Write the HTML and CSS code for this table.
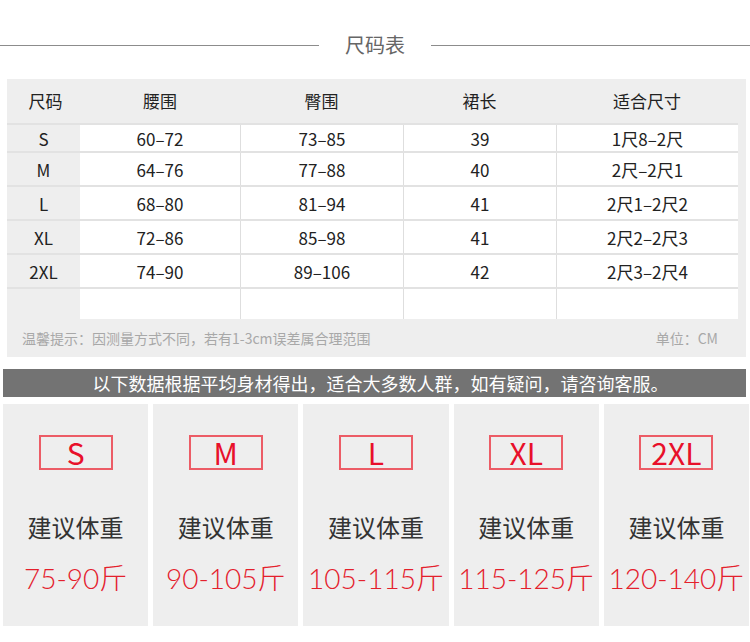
FILE: index.html
```html
<!DOCTYPE html>
<html lang="zh">
<head>
<meta charset="utf-8">
<link rel="stylesheet" href="styles.css">
</head>
<body>
<div class="title">
  <span class="line"></span>
  <span class="title-text">尺码表</span>
  <span class="line"></span>
</div>

<div class="table">
  <div class="row head">
    <div class="c c1">尺码</div><div class="c">腰围</div><div class="c">臀围</div><div class="c">裙长</div><div class="c">适合尺寸</div>
  </div>
  <div class="row r-s">
    <div class="c c1">S</div><div class="c w">60–72</div><div class="c w">73–85</div><div class="c w">39</div><div class="c w">1尺8–2尺</div>
  </div>
  <div class="row">
    <div class="c c1">M</div><div class="c w">64–76</div><div class="c w">77–88</div><div class="c w">40</div><div class="c w">2尺–2尺1</div>
  </div>
  <div class="row">
    <div class="c c1">L</div><div class="c w">68–80</div><div class="c w">81–94</div><div class="c w">41</div><div class="c w">2尺1–2尺2</div>
  </div>
  <div class="row">
    <div class="c c1">XL</div><div class="c w">72–86</div><div class="c w">85–98</div><div class="c w">41</div><div class="c w">2尺2–2尺3</div>
  </div>
  <div class="row">
    <div class="c c1">2XL</div><div class="c w">74–90</div><div class="c w">89–106</div><div class="c w">42</div><div class="c w">2尺3–2尺4</div>
  </div>
  <div class="row r-empty">
    <div class="c c1"></div><div class="c w"></div><div class="c w"></div><div class="c w"></div><div class="c w"></div>
  </div>
  <div class="note">
    <span>温馨提示：因测量方式不同，若有1-3cm误差属合理范围</span>
    <span>单位：CM</span>
  </div>
</div>

<div class="banner">以下数据根据平均身材得出，适合大多数人群，如有疑问，请咨询客服。</div>

<div class="cards">
  <div class="card"><div class="size">S</div><div class="label">建议体重</div><div class="weight">75-90斤</div></div>
  <div class="card"><div class="size">M</div><div class="label">建议体重</div><div class="weight">90-105斤</div></div>
  <div class="card"><div class="size">L</div><div class="label">建议体重</div><div class="weight">105-115斤</div></div>
  <div class="card"><div class="size">XL</div><div class="label">建议体重</div><div class="weight">115-125斤</div></div>
  <div class="card"><div class="size">2XL</div><div class="label">建议体重</div><div class="weight">120-140斤</div></div>
</div>
</body>
</html>
```
FILE: styles.css
```css
* { box-sizing: border-box; }
html, body { margin: 0; padding: 0; background: #fff; }
body {
  width: 750px;
  font-family: "Noto Sans CJK SC", "Noto Sans", sans-serif;
  color: #333;
}

.title {
  display: flex;
  align-items: center;
  height: 24px;
  margin-top: 33px;
}
.title .line {
  flex: 1;
  height: 1px;
  background: #8c8c8c;
}
.title-text {
  padding: 0 26px;
  font-size: 20px;
  line-height: 24px;
  color: #666;
}

.table {
  margin: 22px 0 0 7px;
  width: 739px;
  background: #eeeeee;
  padding-right: 8px;
}
.row {
  display: grid;
  grid-template-columns: 73px 160px 163px 153px 182px;
  height: 34px;
  border-top: 2px solid #e2e2e2;
}
.row.head {
  height: 44px;
  border-top: 0;
  background: #eeeeee;
}
.row.r-s { height: 28px; }
.row.r-empty { height: 32px; }
.c {
  display: flex;
  align-items: center;
  justify-content: center;
  font-size: 17px;
  color: #222;
}
.head .c { font-size: 17px; color: #222; padding-bottom: 2px; }
.head .c1 { padding-left: 4px; }
.c.w { background: #fff; }
.c.w + .c.w { border-left: 1px solid #dedede; }

.note {
  display: flex;
  justify-content: space-between;
  align-items: center;
  height: 38px;
  padding: 0 20px 0 15px;
  font-size: 14px;
  color: #a8a8a8;
}

.banner {
  margin: 12px 0 0 3px;
  width: 743px;
  height: 28px;
  background: #737373;
  color: #fff;
  font-size: 18px;
  line-height: 28px;
  text-align: center;
  padding-left: 12px;
}

.cards {
  display: grid;
  grid-template-columns: repeat(5, 1fr);
  gap: 5px;
  margin: 7px 0 0 3px;
  width: 746px;
}
.card {
  background: #eeeeee;
  height: 222px;
  display: flex;
  flex-direction: column;
  align-items: center;
  padding-top: 31px;
}
.size {
  width: 74px;
  height: 35px;
  border: 2px solid #ec5c66;
  color: #e8102a;
  font-size: 30px;
  line-height: 31px;
  text-align: center;
}
.label {
  margin-top: 40px;
  font-size: 24px;
  line-height: 34px;
  color: #333;
}
.weight {
  margin-top: 17px;
  font-family: "Lato", "Noto Sans CJK SC", sans-serif;
  font-size: 28px;
  line-height: 34px;
  color: #e4202c;
  font-weight: 300;
  white-space: nowrap;
}
```
